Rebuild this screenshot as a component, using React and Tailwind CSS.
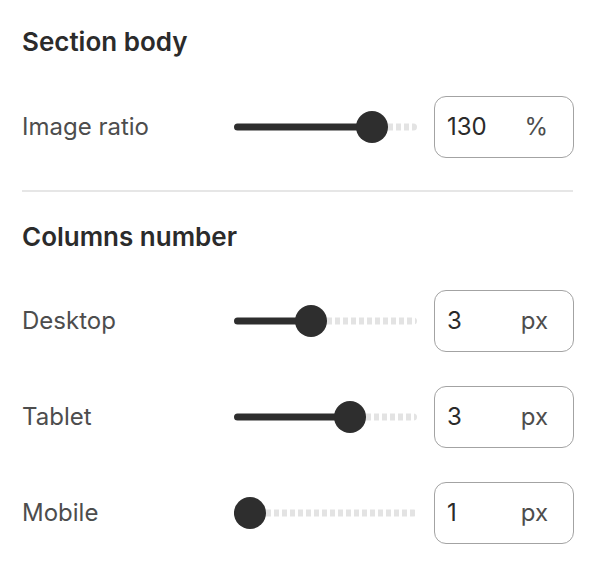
import React from 'react';

const Slider = ({ pos }) => {
  // pos = distance in px from the track's left edge to the knob centre
  return (
    <div className="relative w-[183px] h-8 shrink-0">
      <div
        className="absolute top-1/2 -translate-y-1/2 left-0 h-[7px] rounded-full bg-[#2e2e2e]"
        style={{ width: pos }}
      />
      <div
        className="absolute top-1/2 -translate-y-1/2 right-0 h-[7px] rounded-r-full bg-[repeating-linear-gradient(90deg,#e3e3e3_0_5px,transparent_5px_8px)]"
        style={{ left: pos }}
      />
      <div
        className="absolute top-1/2 -translate-y-1/2 w-8 h-8 rounded-full bg-[#2e2e2e]"
        style={{ left: pos - 16 }}
      />
    </div>
  );
};

const Row = ({ label, value, unit, pos, className = '' }) => (
  <div className={`flex items-center ${className}`}>
    <div className="w-[212px] shrink-0 text-[24px] text-[#4d4d4d]">{label}</div>
    <Slider pos={pos} />
    <div className="ml-[17px] w-[140px] h-[62px] shrink-0 flex items-center justify-between pl-[12px] pr-[25px] border border-[#a3a3a3] rounded-[12px] text-[24px]">
      <span className="text-[#2a2a2a]">{value}</span>
      <span className="text-[#4d4d4d]">{unit}</span>
    </div>
  </div>
);

const App = () => {
  return (
    <div className="bg-white w-[594px] h-[576px] pl-[22px] pr-[21px] pt-[26px] font-['Inter',sans-serif]">
      <h2 className="text-[26px] leading-8 font-semibold text-[#2b2b2b]">Section body</h2>
      <Row label="Image ratio" value="130" unit="%" pos={138} className="mt-[38px]" />

      <div className="mt-[32px] h-[2px] bg-[#e6e6e6]" />

      <h2 className="mt-[29px] text-[26px] leading-8 font-semibold text-[#2b2b2b]">Columns number</h2>
      <Row label="Desktop" value="3" unit="px" pos={77} className="mt-[37px]" />
      <Row label="Tablet" value="3" unit="px" pos={116} className="mt-[34px]" />
      <Row label="Mobile" value="1" unit="px" pos={16} className="mt-[34px]" />
    </div>
  );
};

export default App;
